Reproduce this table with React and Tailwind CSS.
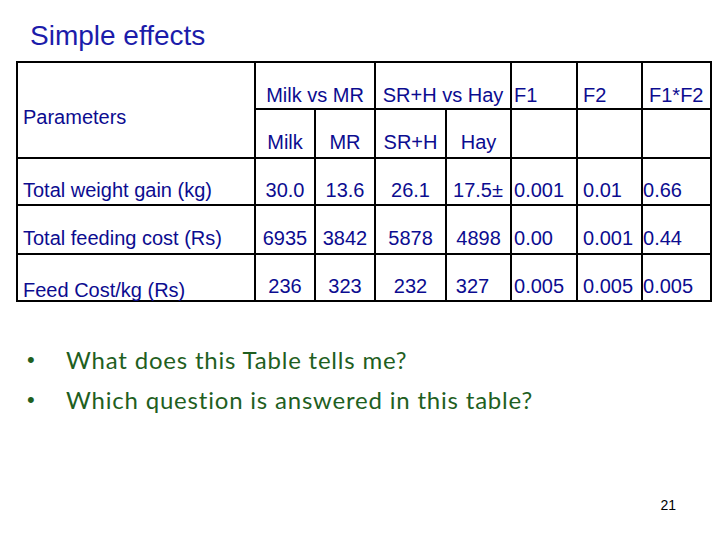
export default function App() {
  const td = "border-2 border-black p-0 align-bottom";
  const num = "text-center";
  return (
    <div className="w-[720px] h-[540px] bg-white overflow-hidden font-['Liberation_Sans',Arial,sans-serif]">
      <div className="pt-[20px] pl-[30px] text-[28px] leading-[32px] text-[#1c1caa]">Simple effects</div>
      <table className="table-fixed border-collapse ml-[16px] mt-[9px] w-[696px] text-[20px] leading-[24px] text-[#0c0c90]">
        <colgroup>
          <col className="w-[238px]" />
          <col className="w-[60px]" />
          <col className="w-[60px]" />
          <col className="w-[71px]" />
          <col className="w-[65px]" />
          <col className="w-[66px]" />
          <col className="w-[65px]" />
          <col className="w-[69px]" />
        </colgroup>
        <tbody>
          <tr className="h-[47px]">
            <td rowSpan={2} className={`${td} pl-[5px] pb-[28px]`}>Parameters</td>
            <td colSpan={2} className={`${td} ${num} pb-[1px]`}>Milk vs MR</td>
            <td colSpan={2} className={`${td} ${num} pb-[1px]`}>SR+H vs Hay</td>
            <td className={`${td} pl-[2px] pb-[1px]`}>F1</td>
            <td className={`${td} pl-[5px] pb-[1px]`}>F2</td>
            <td className={`${td} pl-[6px] pb-[1px]`}>F1*F2</td>
          </tr>
          <tr className="h-[49px]">
            <td className={`${td} ${num} pb-[3px]`}>Milk</td>
            <td className={`${td} ${num} pb-[3px]`}>MR</td>
            <td className={`${td} ${num} pb-[3px]`}>SR+H</td>
            <td className={`${td} ${num} pb-[3px]`}>Hay</td>
            <td className={td}></td>
            <td className={td}></td>
            <td className={td}></td>
          </tr>
          <tr className="h-[47px]">
            <td className={`${td} pl-[5px] pb-[2px]`}>Total weight gain (kg)</td>
            <td className={`${td} ${num} pb-[2px]`}>30.0</td>
            <td className={`${td} ${num} pb-[2px]`}>13.6</td>
            <td className={`${td} ${num} pb-[2px]`}>26.1</td>
            <td className={`${td} pl-[6px] pb-[2px] whitespace-nowrap`}>17.5±</td>
            <td className={`${td} pl-[2px] pb-[2px]`}>0.001</td>
            <td className={`${td} pl-[5px] pb-[2px]`}>0.01</td>
            <td className={`${td} pl-0 pb-[2px]`}>0.66</td>
          </tr>
          <tr className="h-[49px]">
            <td className={`${td} pl-[5px] pb-[3px]`}>Total feeding cost (Rs)</td>
            <td className={`${td} ${num} pb-[3px]`}>6935</td>
            <td className={`${td} ${num} pb-[3px]`}>3842</td>
            <td className={`${td} ${num} pb-[3px]`}>5878</td>
            <td className={`${td} ${num} pb-[3px]`}>4898</td>
            <td className={`${td} pl-[2px] pb-[3px]`}>0.00</td>
            <td className={`${td} pl-[5px] pb-[3px]`}>0.001</td>
            <td className={`${td} pl-0 pb-[3px]`}>0.44</td>
          </tr>
          <tr className="h-[47px]">
            <td className={`${td} pl-[5px] pb-0 leading-[20px]`}>Feed Cost/kg (Rs)</td>
            <td className={`${td} ${num} pb-[2px]`}>236</td>
            <td className={`${td} ${num} pb-[2px]`}>323</td>
            <td className={`${td} ${num} pb-[2px]`}>232</td>
            <td className={`${td} ${num} pb-[2px] pr-[12px]`}>327</td>
            <td className={`${td} pl-[2px] pb-[2px]`}>0.005</td>
            <td className={`${td} pl-[5px] pb-[2px]`}>0.005</td>
            <td className={`${td} pl-0 pb-[2px]`}>0.005</td>
          </tr>
        </tbody>
      </table>
      <ul className="mt-[38px] text-[#1f5f1f] text-[24px] leading-[40px] tracking-[0.8px] font-['Lato','Noto_Sans',sans-serif]">
        <li className="flex">
          <span className="w-[66px] shrink-0 pl-[27px] font-['Liberation_Sans',Arial,sans-serif] text-[22px] tracking-normal">•</span>
          <span>What does this Table tells me?</span>
        </li>
        <li className="flex">
          <span className="w-[66px] shrink-0 pl-[27px] font-['Liberation_Sans',Arial,sans-serif] text-[22px] tracking-normal">•</span>
          <span>Which question is answered in this table?</span>
        </li>
      </ul>
      <div className="mt-[77px] flex justify-end pr-[44px] text-[14px] leading-[16px] text-black">21</div>
    </div>
  );
}
